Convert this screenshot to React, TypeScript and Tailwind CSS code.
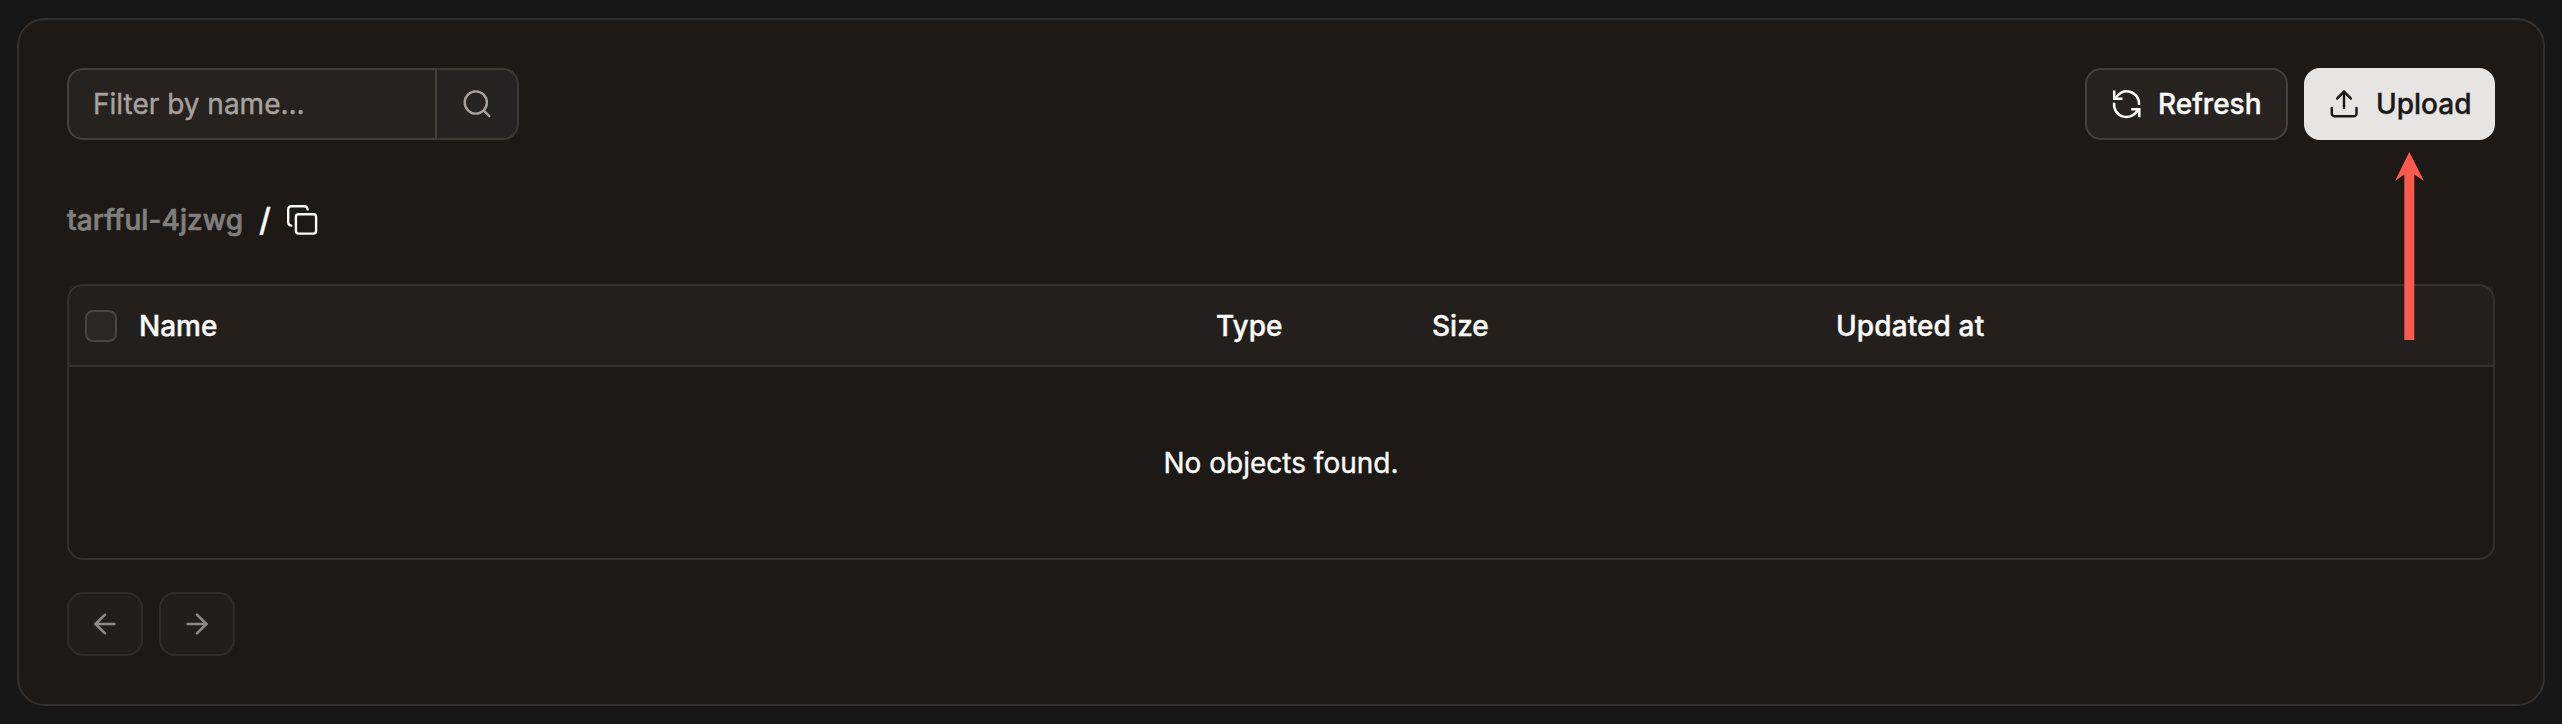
import { ArrowLeft, ArrowRight } from "lucide-react";

const stroke = {
  fill: "none",
  stroke: "currentColor",
  strokeLinecap: "round" as const,
  strokeLinejoin: "round" as const,
};

function SearchIcon() {
  return (
    <svg viewBox="0 0 32 32" className="size-8 text-[#a8a29e]" strokeWidth="2.4" {...stroke}>
      <circle cx="14.8" cy="14.5" r="11.1" />
      <path d="M22.8 22.500l5.500 5.700" />
    </svg>
  );
}

function RefreshIcon() {
  return (
    <svg viewBox="0 0 32 32" className="size-8" strokeWidth="2.5" {...stroke} strokeLinecap="butt" strokeLinejoin="miter">
      <path d="M3.200 2.600V10.700H11.500" />
      <path d="M4.300 10.700A12.400 12.400 0 0 1 28 16.900" />
      <path d="M3.200 14.800A12.400 12.400 0 0 0 27 21.200" />
      <path d="M20.200 21.200H28.300V29.200" />
    </svg>
  );
}

function UploadIcon() {
  return (
    <svg viewBox="0 0 32 32" className="size-8" strokeWidth="2.5" {...stroke}>
      <path d="M3.800 20v5.700a2.500 2.500 0 0 0 2.500 2.500h19.700a2.500 2.500 0 0 0 2.500-2.500V20" />
      <path d="M16 20V3.600M9.200 10.500l6.800-6.900 6.800 6.900" />
    </svg>
  );
}

function CopyIcon() {
  return (
    <svg viewBox="0 0 32 32" className="size-8" strokeWidth="2.4" {...stroke}>
      <rect x="9.9" y="10.2" width="20.2" height="19.4" rx="2.6" />
      <path d="M5.400 21.600a3.200 3.200 0 0 1-3.200-3.200V5.200a3 3 0 0 1 3-3H18.400a3.200 3.200 0 0 1 3.200 3.200" />
    </svg>
  );
}

export default function App() {
  return (
    <div className="h-[724px] w-[2562px] bg-[#171717] pt-[18px] pl-[17px] font-['Inter',sans-serif] text-[28px] leading-10 font-medium text-[#fafaf9] [-webkit-text-stroke:0.4px_currentColor]">
      <main className="h-[688px] w-[2528px] rounded-[28px] border-2 border-[#33302d] bg-[#1c1917] px-12 pt-12">
        <div className="flex justify-between">
          <div className="flex h-[72px] w-[452px]">
            <div className="flex w-[370px] items-center rounded-l-2xl border-2 border-[#44403d] bg-[#262220] pl-6 font-normal text-[#a8a29e]">
              Filter by name...
            </div>
            <button className="flex flex-1 items-center justify-center rounded-r-2xl border-2 border-l-0 border-[#3d3937] bg-[#262322]">
              <SearchIcon />
            </button>
          </div>
          <div className="flex gap-4">
            <button className="flex h-[72px] w-[203px] items-center gap-[15px] rounded-2xl border-2 border-[#44403e] bg-[#262321] pl-6">
              <RefreshIcon />
              Refresh
            </button>
            <div className="relative">
              <button className="flex h-[72px] w-[191px] items-center gap-4 rounded-2xl bg-[#e7e5e4] pl-6 text-[#1c1917]">
                <UploadIcon />
                Upload
              </button>
              <svg
                viewBox="0 0 29 188"
                className="absolute top-[84px] left-[91px] h-[188px] w-[29px] fill-[#ff5a4d]"
              >
                <path d="M14.300 0L29 29L19.300 22.500V188H9.300V22.500L0 29Z" />
              </svg>
            </div>
          </div>
        </div>

        <div className="mt-[60px] flex h-10 items-center">
          <span className="w-[192px] tracking-[0.003em] text-[#817f7d] [-webkit-text-stroke:0.7px_currentColor]">
            tarfful-4jzwg
          </span>
          <span className="w-[27px] pb-px text-[32px]">/</span>
          <CopyIcon />
        </div>

        <section className="mt-11 h-[276px] rounded-2xl border-2 border-[#33302d]">
          <header className="flex h-[81px] items-center border-b-2 border-[#33302d] bg-[#fff5ea]/[0.026]">
            <span className="ml-4 size-8 rounded-lg border-2 border-[#484543] bg-[#2a2725]" />
            <span className="ml-[22px] w-[1077px]">Name</span>
            <span className="w-[216px]">Type</span>
            <span className="w-[404px]">Size</span>
            <span className="tracking-[0.004em]">Updated at</span>
          </header>
          <p className="flex h-[191px] items-center justify-center font-normal">No objects found.</p>
        </section>

        <nav className="mt-8 flex gap-4 text-[#8c8a88]">
          <button className="flex h-16 w-[76px] items-center justify-center rounded-2xl border-2 border-[#2f2c2a] bg-[#211e1c]">
            <ArrowLeft size={32} strokeWidth={2} />
          </button>
          <button className="flex h-16 w-[76px] items-center justify-center rounded-2xl border-2 border-[#2f2c2a] bg-[#211e1c]">
            <ArrowRight size={32} strokeWidth={2} />
          </button>
        </nav>
      </main>
    </div>
  );
}
